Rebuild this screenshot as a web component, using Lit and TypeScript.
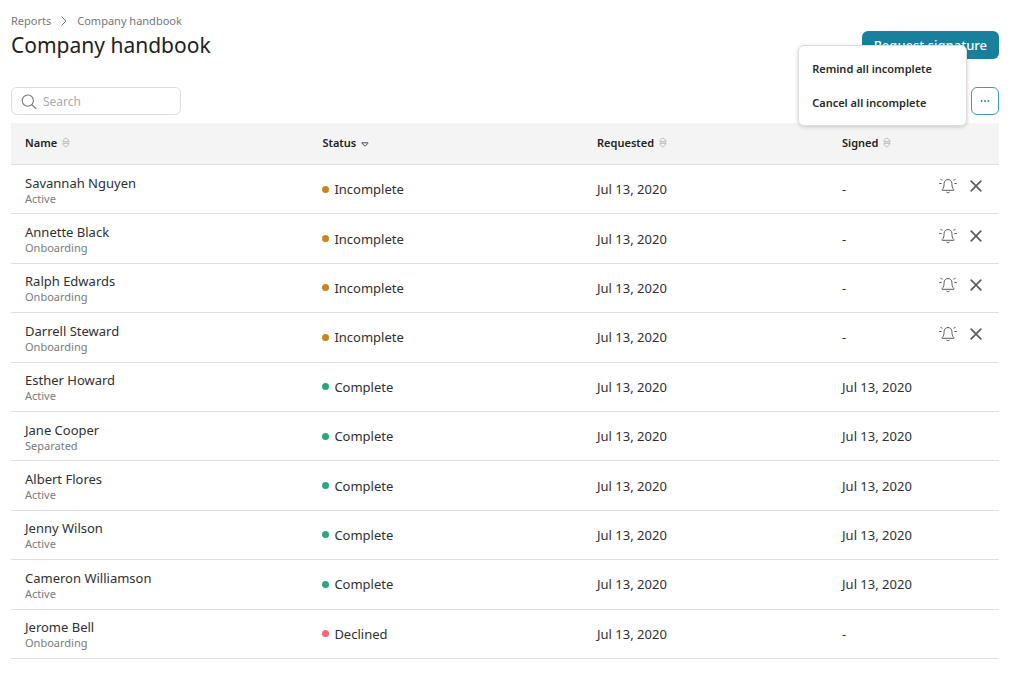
import { LitElement, html, css, svg, nothing } from "lit";
import { customElement, state } from "lit/decorators.js";
import { classMap } from "lit/directives/class-map.js";

type Status = "Incomplete" | "Complete" | "Declined";

interface Recipient {
  name: string;
  employment: string;
  status: Status;
  requested: string;
  signed: string;
}

const DATE = "Jul 13, 2020";

const person = (name: string, employment: string, status: Status): Recipient => ({
  name,
  employment,
  status,
  requested: DATE,
  signed: status === "Complete" ? DATE : "-",
});

const RECIPIENTS: Recipient[] = [
  person("Savannah Nguyen", "Active", "Incomplete"),
  person("Annette Black", "Onboarding", "Incomplete"),
  person("Ralph Edwards", "Onboarding", "Incomplete"),
  person("Darrell Steward", "Onboarding", "Incomplete"),
  person("Esther Howard", "Active", "Complete"),
  person("Jane Cooper", "Separated", "Complete"),
  person("Albert Flores", "Active", "Complete"),
  person("Jenny Wilson", "Active", "Complete"),
  person("Cameron Williamson", "Active", "Complete"),
  person("Jerome Bell", "Onboarding", "Declined"),
];

const stroke = (w: number, h: number, width: number, body: unknown) => html`<svg
  width=${w}
  height=${h}
  viewBox="0 0 ${w} ${h}"
  fill="none"
  stroke="currentColor"
  stroke-width=${width}
  stroke-linecap="round"
  stroke-linejoin="round"
  aria-hidden="true"
>${body}</svg>`;

const chevronIcon = stroke(6, 10, 1, svg`<path d="M.8.8 5 5 .8 9.2" />`);
const searchIcon = stroke(16, 16, 1.1, svg`<circle cx="6.800" cy="6.600" r="5.600" /><path d="m10.800 10.700 4.200 3.800" />`);
const dotsIcon = html`<svg width="10" height="4" viewBox="0 0 10 4" fill="currentColor" aria-hidden="true">
  <circle cx="1.6" cy="2" r=".9" /><circle cx="5" cy="2" r=".9" /><circle cx="8.4" cy="2" r=".9" />
</svg>`;
const sortIcon = stroke(8, 12, 0.8, svg`
  <path d="M3.600 1.200h.8L7 4v.7H1V4ZM3.600 9.800h.8L7 7v-.7H1V7Z" />
`);
const sortedIcon = stroke(8, 10, 0.9, svg`<path d="M1.200 4.800h5.600v.6L4.500 7.900h-1L1.200 5.400Z" />`);
const bellIcon = stroke(18, 16, 1, svg`
  <path d="M9 1.500c2.400 0 3.800 1.600 3.900 4 .1 3 .3 4.600 2 6.100v.7H3.100v-.7c1.700-1.500 1.900-3.100 2-6.100.1-2.400 1.500-4 3.900-4Z" />
  <path d="M7.700 14.300c.7.6 1.900.6 2.600 0M1.800 1.400l1.300.7M.6 5.500h1.600M16.200 1.400l-1.300.7M17.400 5.500h-1.600" />
`);
const closeIcon = stroke(12, 12, 1.7, svg`<path d="m1.200 1.200 9.600 9.600M10.800 1.200l-9.600 9.600" />`);

@customElement("app-root")
export class AppRoot extends LitElement {
  @state() private menuOpen = true;
  @state() private query = "";

  static styles = css`
    :host {
      display: block;
      font-family: "Noto Sans", sans-serif;
      font-size: 13px;
      line-height: 18px;
      color: #2f2f2f;
      background: #fff;
    }
    *,
    *::before {
      box-sizing: border-box;
    }
    svg {
      display: block;
      flex: none;
    }
    button {
      font: inherit;
      color: inherit;
      padding: 0;
      border: 0;
      background: none;
      cursor: pointer;
    }
    .page {
      display: grid;
      grid-template-rows: auto auto 1fr;
      min-height: 100vh;
      padding: 13px 25px 18px 11px;
    }
    .header {
      display: flex;
      justify-content: space-between;
      align-items: flex-end;
    }
    .crumbs {
      display: flex;
      align-items: center;
      gap: 10px;
      font-size: 11px;
      line-height: 16px;
      color: #777;
    }
    .crumbs a {
      color: inherit;
      text-decoration: none;
    }
    .title {
      margin: 2px 0 0;
      font-size: 21px;
      line-height: 28px;
      font-weight: 400;
      color: #222;
    }
    .primary {
      height: 28px;
      padding: 0 12px;
      border-radius: 6px;
      background: #18809c;
      color: #fff;
      font-size: 13px;
      font-weight: 500;
    }
    .toolbar {
      display: flex;
      justify-content: space-between;
      align-items: center;
      padding: 28px 0 8px;
    }
    .search {
      display: flex;
      align-items: center;
      gap: 6px;
      width: 170px;
      height: 28px;
      padding: 1px 9px 0;
      border: 1px solid #dedede;
      border-radius: 6px;
      color: #777;
    }
    .search input {
      flex: 1;
      min-width: 0;
      padding: 0;
      border: 0;
      outline: 0;
      background: none;
      font: inherit;
      font-size: 12px;
      color: #2f2f2f;
    }
    .search input::placeholder {
      color: #aaa;
      opacity: 1;
    }
    .more {
      position: relative;
    }
    .more-button {
      display: grid;
      place-items: center;
      width: 28px;
      height: 28px;
      border: 1px solid #3d9bb3;
      border-radius: 6px;
      color: #18809c;
    }
    .menu {
      position: absolute;
      right: 32px;
      bottom: -11px;
      z-index: 1;
      display: grid;
      padding: 6px 0 5px;
      border: 1px solid #ddd;
      border-radius: 6px;
      background: #fff;
      box-shadow: 0 1px 4px rgb(0 0 0 / 18%);
    }
    .menu button {
      height: 34px;
      padding: 0 34px 0 13px;
      font-size: 11px;
      font-weight: 600;
      text-align: left;
      white-space: nowrap;
      color: #2a2a2a;
    }
    .table {
      width: 100%;
      border-collapse: separate;
      border-spacing: 0;
      table-layout: fixed;
    }
    .table th,
    .table td {
      padding: 0 14px;
      border-bottom: 1px solid #dfdfdf;
      text-align: left;
      vertical-align: middle;
    }
    .table th {
      height: 42px;
      padding-bottom: 2px;
      background: #f4f4f4;
      color: #222;
    }
    .name-col {
      width: 30.1%;
    }
    .status-col {
      width: 27.8%;
    }
    .requested-col {
      width: 24.8%;
    }
    .sort {
      display: flex;
      align-items: center;
      gap: 5px;
      font-size: 11px;
      font-weight: 600;
    }
    .sort svg {
      color: #aaa;
    }
    .sort.sorted svg {
      color: #333;
    }
    .name,
    .employment {
      display: block;
    }
    .name {
      padding-top: 1px;
    }
    .employment {
      font-size: 11px;
      line-height: 14px;
      color: #7a7a7a;
    }
    .status {
      display: flex;
      align-items: center;
      gap: 5px;
    }
    .status::before {
      content: "";
      width: 7px;
      height: 7px;
      border-radius: 50%;
      background: #c8861c;
    }
    .status.complete::before {
      background: #2aa780;
    }
    .status.declined::before {
      background: #ee6a77;
    }
    .signed {
      display: flex;
      justify-content: space-between;
      align-items: center;
    }
    .actions {
      display: flex;
      align-items: center;
      gap: 13px;
      padding: 0 3px 6px 0;
      color: #5c5c5c;
    }
  `;

  private heading(label: string, column: string, sorted = false) {
    return html`<th class=${column} scope="col" aria-sort=${sorted ? "descending" : nothing}>
      <button class=${classMap({ sort: true, sorted })}>${label}${sorted ? sortedIcon : sortIcon}</button>
    </th>`;
  }

  private row(r: Recipient) {
    return html`<tr>
      <td><span class="name">${r.name}</span><span class="employment">${r.employment}</span></td>
      <td><span class="status ${r.status.toLowerCase()}">${r.status}</span></td>
      <td>${r.requested}</td>
      <td>
        <div class="signed">
          <span>${r.signed}</span>
          ${r.status === "Incomplete"
            ? html`<span class="actions">
                <button aria-label="Remind ${r.name}">${bellIcon}</button>
                <button aria-label="Cancel request for ${r.name}">${closeIcon}</button>
              </span>`
            : nothing}
        </div>
      </td>
    </tr>`;
  }

  render() {
    const shown = RECIPIENTS.filter((r) => r.name.toLowerCase().includes(this.query.toLowerCase()));
    return html`<main class="page">
      <header class="header">
        <div>
          <nav class="crumbs" aria-label="Breadcrumb">
            <a href="#reports">Reports</a>${chevronIcon}<a href="#handbook" aria-current="page">Company handbook</a>
          </nav>
          <h1 class="title">Company handbook</h1>
        </div>
        <button class="primary">Request signature</button>
      </header>
      <div class="toolbar">
        <label class="search">
          ${searchIcon}
          <input
            type="text"
            placeholder="Search"
            aria-label="Search"
            @input=${(e: Event) => (this.query = (e.target as HTMLInputElement).value)}
          />
        </label>
        <div class="more">
          <button
            class="more-button"
            aria-label="More actions"
            aria-expanded=${this.menuOpen}
            @click=${() => (this.menuOpen = !this.menuOpen)}
          >${dotsIcon}</button>
          ${this.menuOpen
            ? html`<div class="menu">
                <button>Remind all incomplete</button>
                <button>Cancel all incomplete</button>
              </div>`
            : nothing}
        </div>
      </div>
      <table class="table">
        <thead>
          <tr>
            ${this.heading("Name", "name-col")} ${this.heading("Status", "status-col", true)}
            ${this.heading("Requested", "requested-col")} ${this.heading("Signed", "signed-col")}
          </tr>
        </thead>
        <tbody>
          ${shown.map((r) => this.row(r))}
        </tbody>
      </table>
    </main>`;
  }
}
